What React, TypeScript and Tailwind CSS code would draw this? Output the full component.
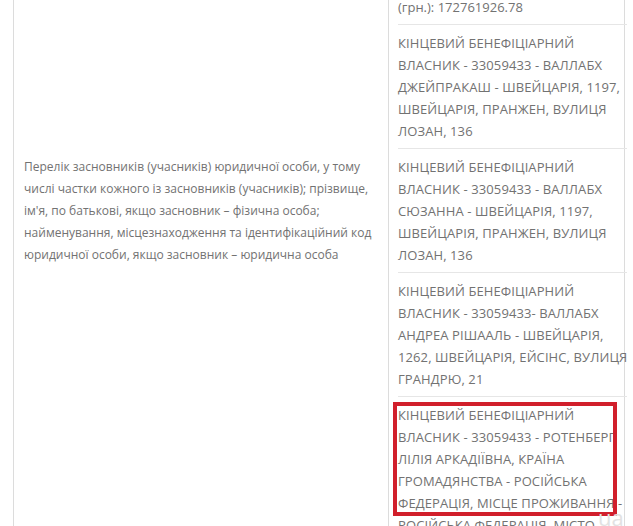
import React from "react";

const blocks: string[][] = [
  [
    "КІНЦЕВИЙ БЕНЕФІЦІАРНИЙ",
    "ВЛАСНИК - 33059433 - ВАЛЛАБХ",
    "ДЖЕЙПРАКАШ - ШВЕЙЦАРІЯ, 1197,",
    "ШВЕЙЦАРІЯ, ПРАНЖЕН, ВУЛИЦЯ",
    "ЛОЗАН, 136",
  ],
  [
    "КІНЦЕВИЙ БЕНЕФІЦІАРНИЙ",
    "ВЛАСНИК - 33059433 - ВАЛЛАБХ",
    "СЮЗАННА - ШВЕЙЦАРІЯ, 1197,",
    "ШВЕЙЦАРІЯ, ПРАНЖЕН, ВУЛИЦЯ",
    "ЛОЗАН, 136",
  ],
  [
    "КІНЦЕВИЙ БЕНЕФІЦІАРНИЙ",
    "ВЛАСНИК - 33059433- ВАЛЛАБХ",
    "АНДРЕА РІШААЛЬ - ШВЕЙЦАРІЯ,",
    "1262, ШВЕЙЦАРІЯ, ЕЙСІНС, ВУЛИЦЯ",
    "ГРАНДРЮ, 21",
  ],
];

const last = [
  "КІНЦЕВИЙ БЕНЕФІЦІАРНИЙ",
  "ВЛАСНИК - 33059433 - РОТЕНБЕРГ",
  "ЛІЛІЯ АРКАДІЇВНА, КРАЇНА",
  "ГРОМАДЯНСТВА - РОСІЙСЬКА",
  "ФЕДЕРАЦІЯ, МІСЦЕ ПРОЖИВАННЯ -",
  "РОСІЙСЬКА ФЕДЕРАЦІЯ, МІСТО",
];

const leftLines = [
  "Перелік засновників (учасників) юридичної особи, у тому",
  "числі частки кожного із засновників (учасників); прізвище,",
  "ім'я, по батькові, якщо засновник – фізична особа;",
  "найменування, місцезнаходження та ідентифікаційний код",
  "юридичної особи, якщо засновник – юридична особа",
];

export default function App() {
  return (
    <div
      className="relative w-[633px] h-[526px] overflow-hidden bg-white text-[13px] leading-[22px] text-[#727272]"
      style={{ fontFamily: '"Open Sans", "Noto Sans", sans-serif' }}
    >
      <div className="ml-[13px] w-[612px] h-[526px] flex border-l border-r border-[#dcdcdc]">
        <div className="w-[375px] shrink-0 border-r border-[#dcdcdc] pl-[10px] pt-[156px] whitespace-nowrap text-[12px] leading-[22px]">
          {leftLines.map((l, i) => (
            <div key={i}>{l}</div>
          ))}
        </div>
        <div className="flex-1 pl-[9px] pr-[7px] whitespace-nowrap">
          <div className="mt-[-4px] pb-[6px] border-b border-[#e6e6e6]">
            <div>(грн.): 172761926.78</div>
          </div>
          {blocks.map((b, i) => (
            <div key={i} className="pt-[7px] pb-[6px] border-b border-[#e6e6e6]">
              {b.map((l, j) => (
                <div key={j} className="tracking-[0.1px]">{l}</div>
              ))}
            </div>
          ))}
          <div className="pt-[7px]">
            {last.map((l, j) => (
              <div key={j} className="tracking-[0.1px]">{l}</div>
            ))}
          </div>
        </div>
      </div>
      <div className="absolute left-[393px] top-[402px] w-[224px] h-[114px] border-4 border-[#d11f2b]" />
      <div className="absolute left-[598px] top-[504px] text-[22px] leading-[26px] text-[#e2e2e2]">
        ua W
      </div>
    </div>
  );
}
